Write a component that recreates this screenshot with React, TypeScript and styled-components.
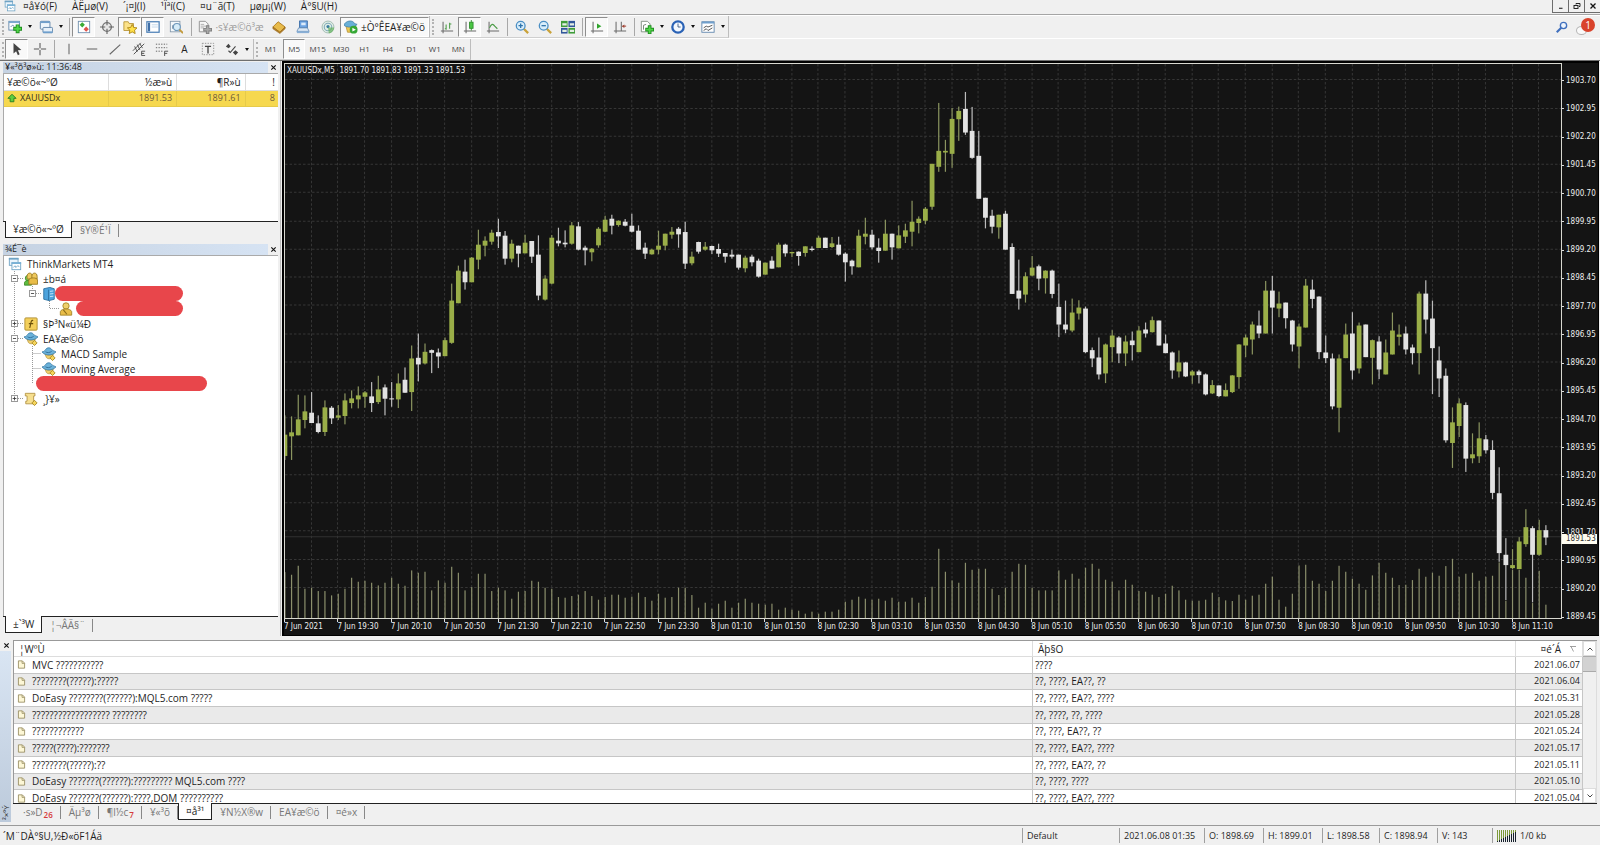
import React from 'react';
import styled, { createGlobalStyle, css } from 'styled-components';

const GlobalStyle = createGlobalStyle`
  *, *::before, *::after { box-sizing: border-box; }
  body { margin: 0; background: #f0f0f0; color: #1e1e1e; font: 10px/14px "Open Sans", "Noto Sans", sans-serif; }
  button { font: inherit; color: inherit; background: none; border: 0; padding: 0; margin: 0; }
  ul { list-style: none; margin: 0; padding: 0; }
  svg { display: block; }
`;

/* ---------- icons ---------- */

const PATHS: Record<string, React.ReactNode> = {
  windows: (
    <>
      <rect x="1.5" y="1.5" width="10" height="8" fill="#eaf4fb" stroke="#6ea3c4" />
      <path d="M1 2h11" stroke="#6ea3c4" strokeWidth="2" />
      <rect x="4.5" y="6.5" width="10" height="8" fill="#fff" stroke="#6ea3c4" />
      <path d="M4 7h11" stroke="#79b2d6" strokeWidth="2" />
      <path d="M6 12l2-2 1 2 2-2 2 1" fill="none" stroke="#6ea3c4" />
    </>
  ),
  newChart: (
    <>
      <rect x="1" y="1.5" width="12" height="10" fill="#fff" stroke="#5d84a8" />
      <path d="M1 2.5h12" stroke="#7ca9d0" strokeWidth="2" />
      <path d="M3 8l2-2 2 1" fill="none" stroke="#5d84a8" />
      <path d="M11 5v10M6 10h10" stroke="#1d8c1d" strokeWidth="4.4" />
      <path d="M11 6v8M7 10h8" stroke="#4fd648" strokeWidth="2.4" />
    </>
  ),
  profiles: (
    <>
      <rect x="1.5" y="1.5" width="11" height="9" rx="1" fill="#eef6fc" stroke="#587ea5" />
      <path d="M1.5 2.5h11" stroke="#6f9fcc" strokeWidth="2" />
      <rect x="4.5" y="8.5" width="11" height="6" rx="1" fill="#e6f0f9" stroke="#587ea5" />
      <path d="M4.5 14h11" stroke="#6f9fcc" strokeWidth="2" />
    </>
  ),
  market: (
    <>
      <rect x="1.5" y="1.5" width="13" height="13" fill="#fff" stroke="#6d8dac" />
      <path d="M6 2.500l3 3-3 3-3-3z" fill="#3cab35" />
      <path d="M10.500 7.500l3 3-3 3-3-3z" fill="#e0524b" />
    </>
  ),
  target: (
    <>
      <circle cx="8" cy="8" r="5" fill="#e8e8e8" stroke="#777" strokeWidth="1.6" />
      <path d="M8 0v6M8 10v6M0 8h6M10 8h6" stroke="#666" strokeWidth="1.3" />
    </>
  ),
  navigator: (
    <>
      <path d="M1 2h5l1 2h5v8H1z" fill="#fbe28a" stroke="#b89538" />
      <path d="M10.500 5l1.700 3.500 3.800.500-2.800 2.600.700 3.900-3.400-1.900-3.400 1.900.700-3.900L5 9l3.800-.5z" fill="#ffe14a" stroke="#a98214" />
    </>
  ),
  terminal: (
    <>
      <rect x="1" y="2" width="14" height="12" fill="#fff" stroke="#4a7eb5" strokeWidth="1.4" />
      <path d="M3.500 3v10" stroke="#3f6fa8" strokeWidth="2.4" />
      <path d="M6.500 5.500h7M6.500 8h7" stroke="#bcd2e8" />
    </>
  ),
  tester: (
    <>
      <rect x="1.500" y="1.500" width="11" height="12" fill="#f4f8fb" stroke="#8498ab" />
      <path d="M4 10V6M6 11V7" stroke="#7d93a8" />
      <circle cx="9" cy="8" r="4" fill="#d6ecf8" stroke="#6d97bb" strokeWidth="1.300" />
      <path d="M12 11l4 4" stroke="#c29a3c" strokeWidth="2.200" />
    </>
  ),
  order: (
    <>
      <path d="M1.500 1.500h7l3 3v9h-10z" fill="#f7f7f7" stroke="#8c8c8c" />
      <path d="M3 5h4M3 7h6M3 9h4" stroke="#aaa" />
      <path d="M11 6v10M6 11h10" stroke="#7e7e7e" strokeWidth="4" />
      <path d="M11 7v8M7 11h8" stroke="#a9a9a9" strokeWidth="2" />
    </>
  ),
  book: (
    <>
      <path d="M1 8l6-6 8 6-6 6z" fill="#e8bb4a" stroke="#a9761d" />
      <path d="M1 8v2l8 5.500 6-5.500V8l-6 6z" fill="#b98328" stroke="#8f6218" strokeWidth=".6" />
    </>
  ),
  server: (
    <>
      <path d="M4 1h9v8H4z" fill="#6da4e2" stroke="#3b6da6" />
      <path d="M6 3h5v3H6z" fill="#dcebfa" />
      <path d="M3 9h10l2 4H1z" fill="#dce8f4" stroke="#6a91ba" />
      <path d="M1 13h14v2H1z" fill="#89afd6" />
    </>
  ),
  signal: (
    <>
      <circle cx="8" cy="8" r="6.800" fill="#e1eee6" stroke="#9db7ae" />
      <circle cx="8" cy="8" r="4.300" fill="none" stroke="#7fa9b8" strokeWidth="1.200" />
      <circle cx="8" cy="7.500" r="1.800" fill="#3b7d9f" />
      <path d="M8 8.500l1 7c4-1 6-4 6-7z" fill="#62b15d" opacity=".7" />
    </>
  ),
  autoTrade: (
    <>
      <path d="M2 6h11l1 3-2 5H4z" fill="#eec753" stroke="#aa882b" strokeWidth=".8" />
      <path d="M0 6c1-5 10-7 12-2l3 1c-3 4-12 4-15 1z" fill="#68b0d8" stroke="#3c7ba3" strokeWidth=".8" />
      <circle cx="11" cy="11" r="4.500" fill="#35a835" />
      <path d="M9.600 8.800l4 2.200-4 2.200z" fill="#fff" />
    </>
  ),
  bars: (
    <>
      <path d="M3.500 2v13M1 12.500h14" stroke="#6b6b6b" strokeWidth="1.200" />
      <path d="M7 5v6M5.500 10H7M11 3v7M11 4.500h2" stroke="#4c9c47" strokeWidth="1.200" />
    </>
  ),
  candles: (
    <>
      <path d="M3.500 2v13M1 12.500h14" stroke="#6b6b6b" strokeWidth="1.200" />
      <path d="M9.500 0v12" stroke="#2f8e2c" />
      <rect x="7.500" y="2.500" width="4" height="7" fill="#49c543" stroke="#2f8e2c" />
    </>
  ),
  line: (
    <>
      <path d="M3.500 2v13M1 12.500h14" stroke="#6b6b6b" strokeWidth="1.200" />
      <path d="M4 9c2-5 4-5 6-2l3 3" fill="none" stroke="#4c9c47" strokeWidth="1.300" />
    </>
  ),
  zoomIn: (
    <>
      <path d="M10 10l5 5" stroke="#c9a23a" strokeWidth="2.600" />
      <circle cx="6.500" cy="6.500" r="5" fill="#d9eefb" stroke="#4b8fc4" strokeWidth="1.500" />
      <path d="M6.500 4v5M4 6.500h5" stroke="#2f74ac" strokeWidth="1.500" />
    </>
  ),
  zoomOut: (
    <>
      <path d="M10 10l5 5" stroke="#c9a23a" strokeWidth="2.600" />
      <circle cx="6.500" cy="6.500" r="5" fill="#d9eefb" stroke="#4b8fc4" strokeWidth="1.500" />
      <path d="M4 6.500h5" stroke="#2f74ac" strokeWidth="1.500" />
    </>
  ),
  tile: (
    <>
      <rect x="0" y="1" width="7.500" height="7" fill="#3f9c3a" />
      <rect x="8.500" y="1" width="7.500" height="7" fill="#32579b" />
      <rect x="0" y="9" width="7.500" height="6.500" fill="#32579b" />
      <rect x="8.500" y="9" width="7.500" height="6.500" fill="#3f9c3a" />
      <path d="M1.500 5h5M10 5h5M1.500 12.500h5M10 12.500h5" stroke="#e4efe4" strokeWidth="2.500" />
    </>
  ),
  autoScroll: (
    <>
      <path d="M3.500 2v13M1 12.500h14" stroke="#6b6b6b" strokeWidth="1.200" />
      <path d="M8 4l5 3-5 3z" fill="#2fa52b" />
    </>
  ),
  shift: (
    <>
      <path d="M3.500 2v13M1 12.500h14M9.500 2v10" stroke="#6b6b6b" strokeWidth="1.200" />
      <path d="M15 7h-4" stroke="#a34738" strokeWidth="1.200" />
      <path d="M10 7l3-2v4z" fill="#a34738" />
    </>
  ),
  indicators: (
    <>
      <path d="M1.500 1.500h7l3 3v9h-10z" fill="#fff" stroke="#7b8a7b" />
      <path d="M4 11V6l3-1" fill="none" stroke="#6b7a6b" />
      <path d="M11 6v10M6 11h10" stroke="#1d8c1d" strokeWidth="4.200" />
      <path d="M11 7v8M7 11h8" stroke="#4fd648" strokeWidth="2.200" />
    </>
  ),
  clock: (
    <>
      <circle cx="8" cy="8" r="6.500" fill="#f3f8fe" stroke="#2a62b5" strokeWidth="2.600" />
      <path d="M8 4v4h3" fill="none" stroke="#39557d" />
    </>
  ),
  template: (
    <>
      <rect x="1" y="2" width="14" height="12" fill="#fff" stroke="#5c83ab" />
      <path d="M1 3h14" stroke="#6f9fcc" strokeWidth="2" />
      <path d="M3 9l3-2 2 1 5-2M3 12l3-2 2 2 5-3" fill="none" stroke="#444" />
    </>
  ),
  cursor: <path d="M4 1v12l3-2.500 2 4.500 2-1-2-4.500 4-.5z" fill="#444" />,
  cross: <path d="M8 1v6M8 9v6M1 8h6M9 8h6" stroke="#555" strokeWidth="1.200" />,
  vline: <path d="M8 2v12" stroke="#666" strokeWidth="1.200" />,
  hline: <path d="M2 8h12" stroke="#666" strokeWidth="1.200" />,
  trend: <path d="M2 14L14 3" stroke="#666" strokeWidth="1.200" />,
  channel: (
    <>
      <path d="M1 10l9-9M2 14L14 2M3 5l3 6M6 3l3 6M9 2l3 5" stroke="#444" />
      <path d="M15 10.500h-4v5h4M11 13h3" fill="none" stroke="#444" />
    </>
  ),
  fibo: (
    <>
      <path d="M1 2.500h13M1 6.500h13M1 10.500h9" stroke="#555" strokeDasharray="1.500 1.500" />
      <path d="M15 10.500h-4V16M11 13h3" fill="none" stroke="#444" />
    </>
  ),
  label: (
    <>
      <rect x="1.500" y="1.500" width="13" height="13" fill="none" stroke="#888" strokeDasharray="1.500 1.500" />
      <path d="M4.500 5h7M8 5v8" stroke="#444" strokeWidth="1.500" />
    </>
  ),
  arrows: (
    <>
      <path d="M1 5l3-3 2.500 3L4 7zM9 12l3-2.500 3 2.500-3 3z" fill="#444" />
      <path d="M4 10l2 2 6-7" fill="none" stroke="#444" strokeWidth="1.300" />
    </>
  ),
  up: <path d="M8 2l6.500 6.500H11V14H5V8.500H1.500z" fill="#5fcf3e" stroke="#2c7d22" strokeWidth="1.500" />,
  accounts: (
    <>
      <circle cx="4.500" cy="7" r="3" fill="#7ed15c" stroke="#3d8c2a" />
      <path d="M0.500 15v-3c1-3 7-3 8 0v3z" fill="#5dbb3f" stroke="#3d8c2a" />
      <path d="M3.500 5c0-5 6-5 6 0v3h-6z" fill="#efc95e" stroke="#9a7a22" />
      <path d="M9 5c0-5 6-5 6 0v3H9z" fill="#efc95e" stroke="#9a7a22" />
      <path d="M5.500 14V9c1-3 9-3 10 0v5z" fill="#e9bd48" stroke="#9a7a22" />
    </>
  ),
  serverBlue: (
    <>
      <path d="M2 2l7-1.500L14 2v12l-6 1.500L2 14z" fill="#4da3dc" stroke="#2a6f9f" />
      <path d="M7.500 3v12" stroke="#2a6f9f" />
      <path d="M9 5l4-.5M9 8l4-.500M9 11l4-.500" stroke="#cfe9fa" />
    </>
  ),
  account: (
    <>
      <circle cx="8" cy="4.500" r="3.600" fill="#efd06c" stroke="#a48426" />
      <path d="M1.500 15v-4c1-4 12-4 13 0v4z" fill="#e9bd48" stroke="#a48426" />
      <path d="M5 9l4 5" stroke="#8a6a16" strokeWidth="1.200" />
    </>
  ),
  fx: (
    <>
      <rect x="1" y="1" width="14" height="14" rx="1" fill="#f3cf5b" stroke="#ad8a2b" />
      <path d="M10.500 4c-3-1-2.500 4-4 8.500M5.500 7.500h5" fill="none" stroke="#6a500d" strokeWidth="1.300" />
    </>
  ),
  expert: (
    <>
      <path d="M3 7c2 3 7 3 10 0l-1 5c-3 2-5 2-7 0z" fill="#f0cf6a" stroke="#b4923a" strokeWidth=".8" />
      <path d="M0 5.500c2 0 3-1 4-2.500 2-3 6-2.500 7 0 2 1 3 2 5 2.500C13 10 3 10.500 0 5.500z" fill="#6bb2da" stroke="#3a7ba6" strokeWidth=".9" />
      <path d="M4 5.500c2 1.500 5 1 7-.5" fill="none" stroke="#2f6c96" />
      <path d="M12 9.500l3 3-3 3-3-3z" fill="#f5d55c" stroke="#a6861f" />
    </>
  ),
  script: (
    <>
      <path d="M1.500 1.500h11v3H11v9H2v-3h1.500v-6h-2z" fill="#f6df8f" stroke="#b39445" />
      <path d="M12 9.500l3 3-3 3-3-3z" fill="#f5d55c" stroke="#a6861f" />
    </>
  ),
  doc: (
    <>
      <path d="M2.500 1.500h7l4 4v9h-11z" fill="#fdf7d6" stroke="#8f8355" strokeWidth="1.400" />
      <path d="M9 2v4h4" fill="none" stroke="#8f8355" strokeWidth="1.300" />
    </>
  ),
  search: (
    <>
      <circle cx="10" cy="6" r="4.200" fill="#eef4fc" stroke="#3f6fbd" strokeWidth="1.800" />
      <path d="M7 9l-6 6" stroke="#3f6fbd" strokeWidth="2.800" />
    </>
  ),
  minimize: <path d="M4 12.500h7" stroke="#111" strokeWidth="2" />,
  restore: (
    <>
      <path d="M6 5V3h8v6h-2" fill="none" stroke="#111" strokeWidth="1.800" />
      <rect x="2" y="7" width="8" height="6" fill="none" stroke="#111" strokeWidth="1.800" />
    </>
  ),
  close: <path d="M3 3l10 10M13 3L3 13" stroke="#111" strokeWidth="2.600" />,
  minus: <path d="M3 8h10" stroke="#333" strokeWidth="2.600" />,
  plus: <path d="M2 8h12M8 2v12" stroke="#333" strokeWidth="2.600" />,
  chevUp: <path d="M3 11l5-5 5 5" fill="none" stroke="#444" strokeWidth="2" />,
  chevDown: <path d="M3 5l5 5 5-5" fill="none" stroke="#444" strokeWidth="2" />,
  sort: <path d="M2 3h12M4 3l5 10" fill="none" stroke="#888" strokeWidth="1.600" />,
};

const Icon = ({ name, size = 14 }: { name: string; size?: number }) => (
  <svg width={size} height={size} viewBox="0 0 16 16" aria-hidden="true" style={{ flex: 'none' }}>
    {PATHS[name]}
  </svg>
);

/* ---------- shell ---------- */

const Page = styled.div`
  display: flex;
  flex-direction: column;
  min-height: 100vh;
  overflow: hidden;
`;

const MenuBar = styled.nav`
  display: flex;
  align-items: flex-start;
  justify-content: space-between;
  height: 15px;
  padding-left: 4px;
  border-bottom: 1px solid #a5a5a5;
`;

const MenuItems = styled.div`
  display: flex;
  gap: 15px;
  height: 12px;
  line-height: 12px;
  align-items: center;
  & > svg { margin-right: -8px; }
`;

const WindowButtons = styled.div`
  display: flex;
  button {
    display: grid;
    place-items: center;
    width: 16px;
    height: 13px;
    border: solid #6d6d6d;
    border-width: 0 0 1px 1px;
  }
`;

const Toolbar = styled.div`
  display: flex;
  align-items: stretch;
  height: 23px;
  border-top: 1px solid #fff;
  & + & { height: 22px; }
`;

const Group = styled.div`
  display: flex;
  align-items: center;
  padding-left: 5px;
  border-right: 1px solid #bdbdbd;
  border-bottom: 1px solid #cfcfcf;
  position: relative;
  &::before {
    content: "";
    position: absolute;
    left: 2px;
    top: 3px;
    bottom: 2px;
    border-left: 2px dotted #b3b3b3;
  }
`;

const TimeframeGrid = styled.div`
  display: grid;
  grid-template-columns: repeat(9, 1fr);
  width: 211px;
  height: 20px;
`;

const ToolButton = styled.button<{ $on?: boolean; $w?: number; $muted?: boolean; $small?: boolean }>`
  display: flex;
  align-items: center;
  justify-content: center;
  gap: 3px;
  height: 20px;
  width: ${(p) => p.$w ?? 23}px;
  white-space: nowrap;
  color: ${(p) => (p.$muted ? '#9d9d9d' : '#222')};
  ${(p) => p.$small && css`width: auto; margin: 0 1px; font-size: 8px; color: #444;`}
  ${(p) => p.$on && css`
    background: #f9f9f9;
    border: 1px solid;
    border-color: #8e8e8e #fff #fff #8e8e8e;
  `}
`;

const Caret = styled.span`
  border: solid transparent;
  border-width: 3px 2px 0;
  border-top-color: #111;
  margin-left: 3px;
`;

const Divider = styled.span<{ $w?: number }>`
  display: flex;
  justify-content: center;
  width: ${(p) => p.$w ?? 6}px;
  height: 18px;
  &::before { content: ""; width: 1px; background: #a8a8a8; }
`;

const Spacer = styled.div`flex: 1;`;

const Alerts = styled.div`
  display: flex;
  gap: 8px;
  align-items: center;
  padding-right: 4px;
`;

const AlertButton = styled.button`
  position: relative;
  width: 20px;
  height: 18px;
  &::before {
    content: "";
    position: absolute;
    left: 0;
    bottom: 1px;
    width: 11px;
    height: 9px;
    border-radius: 50%;
    border: 1px solid #b5b5b5;
    background: #fafafa;
  }
`;

const Badge = styled.span`
  position: absolute;
  right: 1px;
  top: 0;
  width: 14px;
  height: 14px;
  border-radius: 50%;
  background: #d9432c;
  color: #fff;
  line-height: 14px;
  text-align: center;
`;

const Workspace = styled.main`
  display: flex;
  flex: 1;
  min-height: 0;
  border-top: 1px solid #6f6f6f;
`;

const Sidebar = styled.aside`
  display: flex;
  flex-direction: column;
  flex: none;
  width: 281px;
  padding: 0 2px 1px 3px;
  gap: 3px;
  border-right: 1px solid #bbb;
`;

const Panel = styled.section<{ $grow?: boolean }>`
  display: flex;
  flex-direction: column;
  ${(p) => p.$grow && css`flex: 1;`}
`;

const PanelTitle = styled.header`
  display: flex;
  align-items: center;
  height: 12px;
  line-height: 12px;
  font-size: 9px;
  span { flex: 1; padding-left: 2px; height: 11px; line-height: 10px; background: linear-gradient(90deg, #c5d2e2, #d6e3f3); }
  button { display: grid; place-items: center; width: 10px; height: 11px; }
`;

const PanelBody = styled.div<{ $h?: number }>`
  position: relative;
  background: #fff;
  border: solid #aaa;
  border-width: 1px 0 0 1px;
  ${(p) => (p.$h ? css`height: ${p.$h}px;` : css`flex: 1;`)}
`;

const Tabs = styled.div<{ $inset?: number }>`
  display: flex;
  align-items: flex-start;
  height: 19px;
  border-top: 1px solid #222;
  padding-left: ${(p) => p.$inset ?? 2}px;
`;

const Tab = styled.button<{ $active?: boolean }>`
  display: flex;
  height: 13px;
  line-height: 13px;
  margin-top: 2px;
  padding: 0 7px 0 8px;
  color: #777;
  border-right: 1px solid #888;
  ${(p) => p.$active && css`
    height: 17px;
    line-height: 17px;
    margin-top: -1px;
    background: #fff;
    color: #222;
    padding: 0 7px;
    border: 1px solid #222;
    border-top: 0;
  `}
  sub { color: #d63a3a; font-size: 8px; font-weight: 600; line-height: 18px; margin-left: 1px; vertical-align: baseline; }
`;

const QuoteTable = styled.table`
  width: 100%;
  border-collapse: collapse;
  table-layout: fixed;
  line-height: 14px;
  th, td { height: 16px; padding: 0 4px; font-weight: 400; text-align: right; border-right: 1px solid #ddd; border-bottom: 1px solid #ddd; }
  th:first-child, td:first-child { text-align: left; padding-left: 3px; }
  th:last-child, td:last-child { border-right: 0; padding: 0 3px; }
  td { background: #f6d84f; border-color: #e6ca4a; font-size: 9px; color: #6f5a3a; }
  td:first-child span { display: flex; align-items: center; gap: 3px; color: #33301f; font-size: 9px; }
`;

/* ---------- navigator tree ---------- */

const TreeLines = styled.svg`
  position: absolute;
  left: 0;
  top: 0;
`;

const Row = styled.li<{ $pad: number }>`
  position: relative;
  display: flex;
  align-items: center;
  height: 15px;
  padding-left: ${(p) => p.$pad}px;
  white-space: nowrap;
  & > svg { margin-right: 5px; }
`;

const Expander = styled.button`
  width: 7px;
  height: 7px;
  margin-right: 6px;
  border: 1px solid #999;
  background: #fff;
  display: grid;
  place-items: center;
`;

const Redacted = styled.span<{ $w: number; $pull?: number }>`
  width: ${(p) => p.$w}px;
  height: 15px;
  margin-left: ${(p) => p.$pull ?? 0}px;
  border-radius: 8px;
  background: #e8464b;
`;

const TREE = [
  { pad: 4, icon: 'windows', text: 'ThinkMarkets MT4' },
  { pad: 7, toggle: 'minus', icon: 'accounts', text: '±b¤á' },
  { pad: 25, toggle: 'minus', icon: 'serverBlue', hidden: 128, pull: -6 },
  { pad: 55, icon: 'account', hidden: 107, pull: -2 },
  { pad: 7, toggle: 'plus', icon: 'fx', text: '§Þ³N«ü¼Ð' },
  { pad: 7, toggle: 'minus', icon: 'expert', text: 'EA¥æ©ö' },
  { pad: 38, icon: 'expert', text: 'MACD Sample' },
  { pad: 38, icon: 'expert', text: 'Moving Average' },
  { pad: 32, hidden: 171 },
  { pad: 7, toggle: 'plus', icon: 'script', text: '¸}¥»' },
];

/* ---------- chart ---------- */

type Candle = [number, number, number, number, number];
/* Each candle: rising flag, high, body top, body bottom, low, in thirds of a plot unit below the segment's base line. */
const SEGMENTS: { base: number; rows: Candle[] }[] = [
  { base: 136, rows: [
    [1,648,706,770,782],[1,651,699,711,782],[1,586,660,708,708],[1,588,636,662,687],[0,578,640,671,671],[0,648,672,698,702],[1,603,624,698,710],[0,620,625,657,674],
    [1,617,648,655,662],[1,582,603,650,675],[1,573,597,611,627],[1,561,588,600,627],[1,575,579,592,625],[0,548,591,611,638],[1,529,570,608,614],[0,555,564,598,648],
    [0,548,597,600,622],[1,522,552,600,626],[0,504,541,580,580],[1,438,477,578,635],[0,402,475,495,546],[1,432,457,492,495],[0,450,452,460,521],[0,447,459,471,506],
    [1,414,422,470,470],[1,252,303,430,433],[1,198,213,311,311],[0,180,216,248,270],[1,172,174,248,248],[1,90,135,180,209],[1,110,123,138,170],[1,90,99,126,135],
    [0,57,97,110,145],[0,94,108,177,195],[1,120,132,177,188],[0,138,138,162,203],[1,105,129,161,161],[0,124,124,171,190],[0,107,165,288,302],[1,227,237,300,303],
    [1,106,114,252,254],[0,84,123,131,140],[0,92,129,134,143],[1,67,77,132,135],[0,67,80,150,152],[0,138,144,152,197],[1,145,147,158,185],[1,82,87,137,144],
    [1,48,60,96,97],[0,45,57,78,104],[1,62,63,76,81],[0,58,66,78,80],[0,42,78,96,98],[0,77,93,150,150],[0,129,144,162,178],[1,147,150,164,165],
    [1,93,138,150,164],[1,102,102,138,152],[1,82,96,105,117],[0,82,87,104,144],[0,66,97,192,208],[1,156,171,191,197],[0,126,127,156,162],[1,127,141,150,153],
    [0,138,139,152,163],
  ] },
  { base: 16, rows: [
    [0,492,508,522,532],[0,520,520,531,549],[0,510,525,531,537],[0,525,525,564,570],[1,528,534,566,578],[0,525,531,548,560],[0,537,543,591,594],[1,549,549,585,585],
    [0,530,543,567,567],[1,489,495,563,563],[0,492,495,521,531],[1,516,517,521,532],[0,515,516,529,558],[1,500,500,520,531],[0,500,507,511,515],[1,468,474,505,505],
    [0,474,474,505,505],[1,472,491,502,505],[0,471,495,525,528],[0,518,522,548,606],[0,540,543,560,585],[1,450,468,563,563],[1,414,462,471,494],[0,450,465,503,509],
    [0,476,504,514,549],[1,420,462,513,513],[0,462,462,503,540],[1,437,467,506,506],[1,432,452,471,490],[1,363,426,456,500],[1,410,417,430,461],[1,382,387,423,434],
    [1,252,252,381,390],[1,69,213,261,276],[1,180,213,218,276],[1,84,117,222,264],[1,80,93,118,183],[0,36,87,158,165],[0,81,153,234,237],[0,153,228,357,357],
    [0,354,354,414,446],[0,390,408,441,461],[1,405,405,443,477],[0,393,402,510,510],[0,491,502,643,643],[0,540,633,657,690],[1,578,590,645,669],[1,529,564,588,590],
    [0,555,560,597,632],[1,572,573,596,642],[0,570,573,643,656],[0,612,682,735,773],[0,663,735,750,761],[1,657,699,753,758],[1,662,684,702,720],[0,681,687,818,821],
    [0,804,812,837,863],[0,774,834,885,900],[1,792,795,882,911],[1,752,768,803,848],[0,770,774,822,851],[1,768,786,822,860],[0,756,783,797,843],
  ] },
  { base: 186, rows: [
    [1,230,243,308,308],[0,219,240,252,264],[1,201,212,248,249],[0,213,213,288,288],[0,255,282,311,311],[0,306,309,363,388],[1,303,339,366,384],[0,337,339,381,383],
    [1,362,366,378,403],[0,361,366,377,402],[0,372,375,435,438],[1,392,407,432,434],[0,408,408,440,443],[1,402,422,441,441],[1,377,378,428,431],[1,284,285,383,418],
    [1,255,264,288,323],[1,216,225,270,315],[0,183,228,252,266],[1,94,123,252,252],[0,79,123,174,252],[1,126,162,177,203],[0,159,159,206,237],[0,211,213,285,306],
    [1,222,231,291,357],[1,88,108,234,234],[0,90,120,148,176],[0,140,141,308,329],[0,258,309,326,341],[0,312,327,471,480],[1,315,327,475,549],[1,222,255,326,326],
    [0,188,252,363,390],[1,219,228,357,372],[0,225,225,323,323],[1,270,272,325,405],[0,260,276,360,389],[1,270,309,375,375],[1,189,243,315,315],[1,225,255,262,288],
    [0,231,252,300,315],[0,285,294,311,345],[1,126,132,311,375],[0,92,132,210,252],[0,153,207,296,434],[0,291,333,387,443],[0,357,379,573,580],[1,474,519,581,656],
    [1,447,462,530,563],[0,459,467,628,668],[1,552,615,627,642],[1,519,567,621,641],[0,557,570,603,613],[0,573,602,731,750],[0,654,732,912,938],[0,867,917,948,1053],
    [1,900,948,957,960],[1,864,877,960,960],[1,780,834,885,893],[0,831,837,917,1060],[1,812,843,917,920],[0,828,843,865,888],
  ] },
];

const VOLUMES = [
  138,130,157,88,91,81,81,68,73,88,121,109,112,106,98,106,121,103,97,143,136,139,83,113,106,154,136,83,93,133,
  133,81,91,83,58,79,81,112,109,91,88,63,61,66,70,81,66,55,63,70,70,61,64,76,63,52,73,61,63,91,
  91,69,31,46,28,43,52,31,46,58,46,43,40,43,25,31,25,22,13,19,13,19,19,25,49,55,64,58,55,58,
  52,61,49,49,61,46,63,94,208,139,113,106,166,145,148,148,88,69,91,139,163,160,91,83,83,83,143,115,133,118,
  151,163,148,115,109,83,115,100,81,79,70,63,73,97,83,55,52,52,55,76,63,53,51,70,55,67,70,103,124,55,
  34,73,158,160,112,103,81,112,157,139,118,103,85,128,166,136,121,99,100,114,148,124,136,127,156,178,124,133,136,112,
  124,127,167,52,145,145,121,45,142,40,
];

const CANDLES = SEGMENTS.flatMap((s) => s.rows.map((r) => [r[0], ...r.slice(1).map((v) => s.base + v / 3)]));
const PLOT_W = 1275;
const PLOT_H = 555;
const xAt = (i: number) => (i * 20) / 3;

const PRICES = Array.from({ length: 20 }, (_, i) => (1903.7 - i * 0.75).toFixed(2));
const TIMES = [
  '7 Jun 2021', '7 Jun 19:30', '7 Jun 20:10', '7 Jun 20:50', '7 Jun 21:30', '7 Jun 22:10', '7 Jun 22:50', '7 Jun 23:30',
  '8 Jun 01:10', '8 Jun 01:50', '8 Jun 02:30', '8 Jun 03:10', '8 Jun 03:50', '8 Jun 04:30', '8 Jun 05:10', '8 Jun 05:50',
  '8 Jun 06:30', '8 Jun 07:10', '8 Jun 07:50', '8 Jun 08:30', '8 Jun 09:10', '8 Jun 09:50', '8 Jun 10:30', '8 Jun 11:10',
];

const ChartFrame = styled.section`
  display: grid;
  grid-template-columns: 1fr 37px;
  grid-template-rows: 1fr 17px;
  flex: 1;
  min-width: 0;
  margin: 0 1px 0 1px;
  padding: 2px 0 0 2px;
  background: #000;
  color: #eee;
  font: 8px/10px "DejaVu Sans Condensed", "Open Sans", sans-serif;
`;

const Plot = styled.div`
  position: relative;
  border: 1px solid #d8d8d0;
  background: #141414;
  min-height: 0;
`;

const PlotSvg = styled.svg`
  position: absolute;
  inset: 0;
  width: 100%;
  height: 100%;
`;

const PlotTitle = styled.div`
  position: absolute;
  left: 2px;
  top: 2px;
  white-space: pre;
`;

const PriceAxis = styled.div`
  position: relative;
  display: flex;
  flex-direction: column;
  justify-content: space-between;
  padding-top: 13px;
  background: #141414;
  border-right: 1px solid #000;
  & > span { display: flex; align-items: center; gap: 2px; height: 9px; }
  & > span::before { content: ""; width: 2px; height: 1px; background: #ddd; }
  & > span:nth-last-child(2) { margin-bottom: -3px; }
`;

const PriceTag = styled.output`
  position: absolute;
  left: 0;
  right: 1px;
  bottom: 75px;
  height: 10px;
  padding-left: 4px;
  background: #fffdf0;
  color: #333;
`;

const TimeAxis = styled.div`
  grid-column: 1 / 3;
  display: grid;
  grid-template-columns: repeat(24, 1fr);
  padding-right: 34px;
  background: #141414;
  border-bottom: 1px solid #000;
  span { border-left: 1px solid #ddd; height: 3px; white-space: nowrap; }
  em { display: block; font-style: normal; padding-top: 3px; margin-left: -1px; }
`;

const Chart = () => (
  <ChartFrame aria-label="XAUUSDx M5">
    <Plot>
      <PlotSvg viewBox={`0 0 ${PLOT_W} ${PLOT_H}`} preserveAspectRatio="none">
        <g stroke="#363636" strokeDasharray="2.500 2">
          {PRICES.slice(0, 19).map((p, i) => (
            <path key={p} d={`M0 ${Math.round(15.3 + i * 28.26) + 0.5}H${PLOT_W}`} />
          ))}
          {Array.from({ length: 47 }, (_, i) => (
            <path key={i} d={`M${Math.round(xAt(4 * i + 4)) - 0.5} 0V${PLOT_H}`} />
          ))}
        </g>
        <path d={`M0 473.500H${PLOT_W}`} stroke="#303030" />
        {VOLUMES.map((v, i) => (
          <rect key={i} x={xAt(i) - 0.7} y={PLOT_H - v / 3} width="1.200" height={v / 3} fill="#8b8f6c" />
        ))}
        {CANDLES.map(([rise, high, top, bottom, low], i) => (
          <g key={i} fill={rise ? '#9aae48' : '#e2e2e2'}>
            <rect x={xAt(i) - 0.7} y={high} width="1.200" height={low - high} fill={rise ? '#8b9560' : '#bcbcbc'} />
            <rect x={xAt(i) - 2.5} y={top} width="4.800" height={bottom - top} />
          </g>
        ))}
      </PlotSvg>
      <PlotTitle>XAUUSDx,M5  1891.70 1891.83 1891.33 1891.53</PlotTitle>
    </Plot>
    <PriceAxis>
      {PRICES.map((p) => <span key={p}>{p}</span>)}
      <PriceTag>1891.53</PriceTag>
    </PriceAxis>
    <TimeAxis>
      {TIMES.map((t) => <span key={t}><em>{t}</em></span>)}
    </TimeAxis>
  </ChartFrame>
);

/* ---------- terminal ---------- */

const Terminal = styled.section`
  display: flex;
  padding: 4px 3px 3px 0;
  border-bottom: 1px solid #9a9a9a;
`;

const Rail = styled.div`
  display: flex;
  flex-direction: column;
  width: 13px;
  button { display: grid; place-items: center; height: 11px; }
  div {
    flex: 1;
    margin-right: 2px;
    background: linear-gradient(#bccadb, #d9e5f3);
    writing-mode: vertical-rl;
    text-orientation: sideways;
    transform: rotate(180deg);
    line-height: 11px;
    font-size: 8px;
    padding-top: 2px;
  }
`;

const TerminalMain = styled.div`
  flex: 1;
  min-width: 0;
`;

const TableArea = styled.div`
  display: flex;
  height: 163px;
  overflow: hidden;
  border: solid #999;
  border-width: 1px 0 0 1px;
  background: #fff;
`;

const NewsTable = styled.table`
  flex: 1;
  height: 166px;
  border-collapse: separate;
  border-spacing: 0;
  table-layout: fixed;
  th, td { padding: 0 2px; font-weight: 400; text-align: left; border-bottom: 1px solid #c6c6c6; border-right: 1px solid #c6c6c6; white-space: nowrap; line-height: 14px; }
  th { height: 16px; padding: 0 5px; border-color: #ddd; }
  th:last-child, td:last-child { text-align: right; }
  td:last-child { font-size: 9px; }
  tbody tr:nth-child(even) { background: #eaeaea; }
  td > span, th > span { display: flex; align-items: center; gap: 6px; }
  td > span { padding-left: 1px; }
  th > span { justify-content: flex-end; gap: 8px; }
`;

const ScrollBar = styled.div`
  display: flex;
  flex-direction: column;
  width: 14px;
  background: #f0f0f0;
  border-right: 1px solid #ddd;
  button { display: grid; place-items: center; height: 15px; background: #fff; border: 1px solid #ddd; }
  i { height: 16px; background: #d2d2d2; border: 1px solid #aaa; border-width: 1px 0; }
  button:last-child { margin-top: auto; }
`;

const StatusBar = styled.footer`
  display: flex;
  align-items: center;
  height: 19px;
  padding-left: 3px;
`;

const StatusText = styled.span`flex: 1;`;

const StatusCell = styled.span<{ $w: number }>`
  display: flex;
  align-items: center;
  gap: 3px;
  width: ${(p) => p.$w}px;
  height: 15px;
  padding-left: 4px;
  border-left: 1px solid #9f9f9f;
  font-size: 9px;
`;

const NEWS: [string, string, string][] = [
  ['MVC ???????????', '????', '2021.06.07'],
  ['????????(?????):?????', '??, ????, EA??, ??', '2021.06.04'],
  ['DoEasy ????????(??????):MQL5.com ?????', '??, ????, EA??, ????', '2021.05.31'],
  ['?????????????????? ????????', '??, ????, ??, ????', '2021.05.28'],
  ['????????????', '??, ???, EA??, ??', '2021.05.24'],
  ['?????(????):???????', '??, ????, EA??, ????', '2021.05.17'],
  ['????????(?????):??', '??, ????, EA??, ??', '2021.05.11'],
  ['DoEasy ???????(??????):????????? MQL5.com ????', '??, ????, ????', '2021.05.10'],
  ['DoEasy ???????(??????):????,DOM ??????????', '??, ????, EA??, ????', '2021.05.04'],
];

const STATUS: [string, number][] = [
  ['Default', 97], ['2021.06.08 01:35', 85], ['O: 1898.69', 59], ['H: 1899.01', 59], ['L: 1898.58', 57], ['C: 1898.94', 58], ['V: 143', 55],
];

const Tool = ({ icon, on, w, caret, label }: { icon: string; on?: boolean; w?: number; caret?: boolean; label?: string }) => (
  <ToolButton type="button" $on={on} $w={w} aria-label={label ?? icon}>
    <Icon name={icon} />
    {caret && <Caret />}
  </ToolButton>
);

export default function App() {
  return (
    <Page>
      <GlobalStyle />
      <MenuBar>
        <MenuItems>
          <Icon name="windows" size={12} />
          {['¤å¥ó(F)', 'ÀËµø(V)', '´¡¤J(I)', '¹Ïªí(C)', '¤u¨ã(T)', 'µøµ¡(W)', 'À°§U(H)'].map((m) => (
            <button type="button" key={m}>{m}</button>
          ))}
        </MenuItems>
        <WindowButtons>
          <button type="button" aria-label="Minimize"><Icon name="minimize" size={8} /></button>
          <button type="button" aria-label="Restore"><Icon name="restore" size={8} /></button>
          <button type="button" aria-label="Close"><Icon name="close" size={8} /></button>
        </WindowButtons>
      </MenuBar>

      <Toolbar>
        <Group>
          <Tool icon="newChart" w={30} caret />
          <Tool icon="profiles" w={31} caret />
          <Divider />
          <Tool icon="market" on />
          <Tool icon="target" />
          <Tool icon="navigator" on />
          <Tool icon="terminal" on />
          <Tool icon="tester" />
          <Divider $w={8} />
          <ToolButton type="button" $muted $w={72}><Icon name="order" />·s¥æ©ö³æ</ToolButton>
          <Tool icon="book" w={24} />
          <Tool icon="server" w={24} />
          <Tool icon="signal" w={25} />
          <ToolButton type="button" $on $w={89}><Icon name="autoTrade" />±Ò°ÊEA¥æ©ö</ToolButton>
        </Group>
        <Group>
          <Tool icon="bars" />
          <Tool icon="candles" on />
          <Tool icon="line" />
          <Divider />
          <Tool icon="zoomIn" />
          <Tool icon="zoomOut" />
          <Tool icon="tile" />
          <Divider />
          <Tool icon="autoScroll" on />
          <Tool icon="shift" />
          <Divider />
          <Tool icon="indicators" w={30} caret />
          <Tool icon="clock" w={31} caret />
          <Tool icon="template" w={30} caret />
        </Group>
        <Spacer />
        <Alerts>
          <button type="button" aria-label="Search"><Icon name="search" size={12} /></button>
          <AlertButton type="button" aria-label="Alerts"><Badge>1</Badge></AlertButton>
        </Alerts>
      </Toolbar>

      <Toolbar>
        <Group>
          <Tool icon="cursor" on />
          <Tool icon="cross" />
          <Divider />
          <Tool icon="vline" />
          <Tool icon="hline" />
          <Tool icon="trend" w={24} />
          <Tool icon="channel" />
          <Tool icon="fibo" />
          <ToolButton type="button">A</ToolButton>
          <Tool icon="label" w={24} />
          <Tool icon="arrows" w={33} caret />
        </Group>
        <Group>
          <TimeframeGrid>
            {['M1', 'M5', 'M15', 'M30', 'H1', 'H4', 'D1', 'W1', 'MN'].map((t) => (
              <ToolButton type="button" key={t} $small $on={t === 'M5'}>{t}</ToolButton>
            ))}
          </TimeframeGrid>
        </Group>
      </Toolbar>

      <Workspace>
        <Sidebar>
          <Panel>
            <PanelTitle>
              <span>¥«³õ³ø»ù: 11:36:48</span>
              <button type="button" aria-label="Close"><Icon name="close" size={7} /></button>
            </PanelTitle>
            <PanelBody $h={148}>
              <QuoteTable>
                <colgroup><col style={{ width: '38%' }} /><col style={{ width: '25%' }} /><col style={{ width: '25%' }} /><col style={{ width: '12%' }} /></colgroup>
                <thead><tr><th>¥æ©ö«~ºØ</th><th>½æ»ù</th><th>¶R»ù</th><th>!</th></tr></thead>
                <tbody><tr><td><span><Icon name="up" size={10} />XAUUSDx</span></td><td>1891.53</td><td>1891.61</td><td>8</td></tr></tbody>
              </QuoteTable>
            </PanelBody>
            <Tabs>
              <Tab type="button" $active>¥æ©ö«~ºØ</Tab>
              <Tab type="button">§Y®É¹Ï</Tab>
            </Tabs>
          </Panel>
          <Panel $grow>
            <PanelTitle>
              <span>¾É¯è</span>
              <button type="button" aria-label="Close"><Icon name="close" size={7} /></button>
            </PanelTitle>
            <PanelBody>
              <TreeLines width="80" height="152" fill="none" stroke="#999" strokeDasharray="1 1">
                <path d="M10.500 15V143M14 22.500H20M14 67.500H20M14 82.500H20M14 142.500H20M28.500 30V37M32 37.500H38M45.500 45V52.500H55M28.500 90V128M28.500 97.500H37M28.500 112.500H37" />
              </TreeLines>
              <ul>
                {TREE.map((r, i) => (
                  <Row key={i} $pad={r.pad}>
                    {r.toggle && <Expander type="button" aria-label="Toggle"><Icon name={r.toggle} size={5} /></Expander>}
                    {r.icon && <Icon name={r.icon} />}
                    {r.hidden ? <Redacted $w={r.hidden} $pull={r.pull} /> : r.text}
                  </Row>
                ))}
              </ul>
            </PanelBody>
            <Tabs>
              <Tab type="button" $active>±`³W</Tab>
              <Tab type="button">¦¬ÂÃ§¨</Tab>
            </Tabs>
          </Panel>
        </Sidebar>
        <Chart />
      </Workspace>

      <Terminal>
        <Rail>
          <button type="button" aria-label="Close"><Icon name="close" size={7} /></button>
          <div>²×ºÝ</div>
        </Rail>
        <TerminalMain>
          <TableArea>
            <NewsTable>
              <colgroup><col /><col style={{ width: 483 }} /><col style={{ width: 67 }} /></colgroup>
              <thead><tr><th>¦WºÙ</th><th>Ãþ§O</th><th><span>¤é´Á<Icon name="sort" size={8} /></span></th></tr></thead>
              <tbody>
                {NEWS.map(([title, category, date]) => (
                  <tr key={date}>
                    <td><span><Icon name="doc" size={9} />{title}</span></td>
                    <td>{category}</td>
                    <td>{date}</td>
                  </tr>
                ))}
              </tbody>
            </NewsTable>
            <ScrollBar>
              <button type="button" aria-label="Scroll up"><Icon name="chevUp" size={8} /></button>
              <i />
              <button type="button" aria-label="Scroll down"><Icon name="chevDown" size={8} /></button>
            </ScrollBar>
          </TableArea>
          <Tabs $inset={2}>
            <Tab type="button">·s»D<sub>26</sub></Tab>
            <Tab type="button">Äµ³ø</Tab>
            <Tab type="button">¶l½c<sub>7</sub></Tab>
            <Tab type="button">¥«³õ</Tab>
            <Tab type="button" $active>¤å³¹</Tab>
            <Tab type="button">¥N½X®w</Tab>
            <Tab type="button">EA¥æ©ö</Tab>
            <Tab type="button">¤é»x</Tab>
          </Tabs>
        </TerminalMain>
      </Terminal>

      <StatusBar>
        <StatusText>´M¨DÀ°§U,½Ð«öF1Áä</StatusText>
        {STATUS.map(([text, w]) => <StatusCell key={text} $w={w}>{text}</StatusCell>)}
        <StatusCell $w={108}>
          <svg width="20" height="12" aria-hidden="true">
            {Array.from({ length: 10 }, (_, i) => (
              <g key={i}>
                <rect x={i * 2} y="0" width="1" height={11 - i} fill="#7d9a3a" />
                <rect x={i * 2} y={11 - i} width="1" height={i + 1} fill="#16202c" />
              </g>
            ))}
          </svg>
          1/0 kb
        </StatusCell>
      </StatusBar>
    </Page>
  );
}
